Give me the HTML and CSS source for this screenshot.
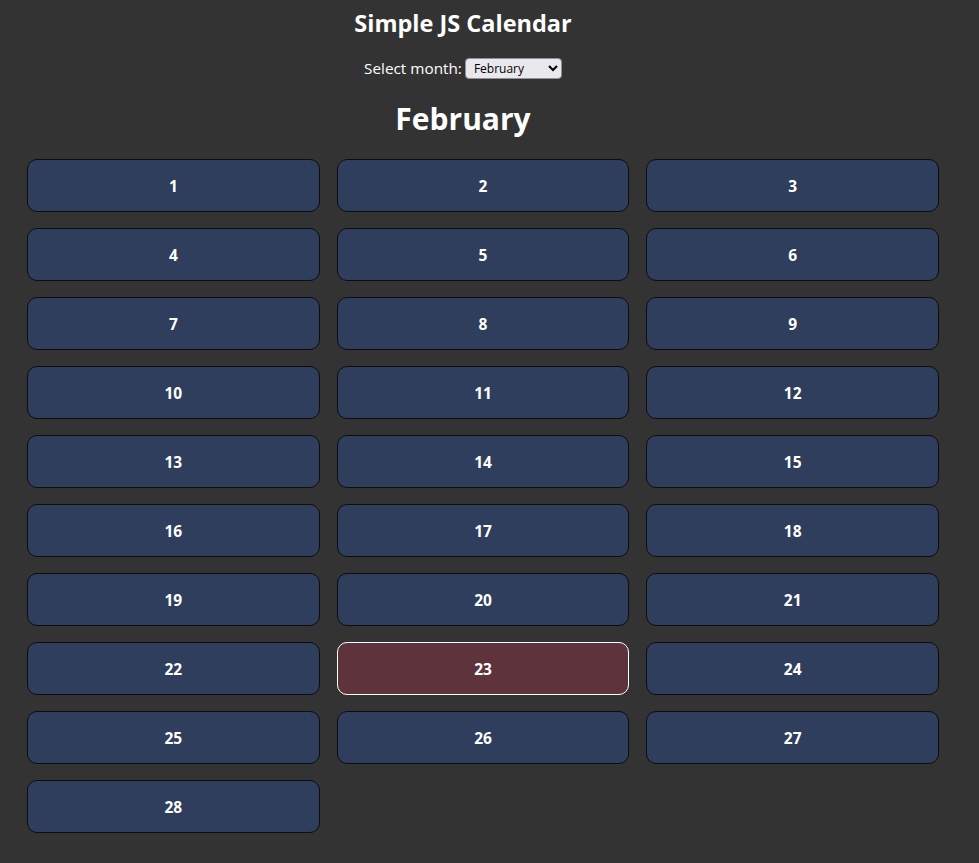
FILE: index.html
```html
<!DOCTYPE html>
<html>
<head>
<meta charset="utf-8">
<link rel="stylesheet" href="styles.css">
</head>
<body>
<header class="top">
  <h1 class="title">Simple JS Calendar</h1>
  <div class="picker">
    <label for="month">Select month:</label>
    <select id="month" class="month-select">
      <option>January</option>
      <option selected>February</option>
      <option>March</option>
    </select>
  </div>
  <h2 class="month-name">February</h2>
</header>
<main class="grid">
  <div class="day">1</div><div class="day">2</div><div class="day">3</div>
  <div class="day">4</div><div class="day">5</div><div class="day">6</div>
  <div class="day">7</div><div class="day">8</div><div class="day">9</div>
  <div class="day">10</div><div class="day">11</div><div class="day">12</div>
  <div class="day">13</div><div class="day">14</div><div class="day">15</div>
  <div class="day">16</div><div class="day">17</div><div class="day">18</div>
  <div class="day">19</div><div class="day">20</div><div class="day">21</div>
  <div class="day">22</div><div class="day today">23</div><div class="day">24</div>
  <div class="day">25</div><div class="day">26</div><div class="day">27</div>
  <div class="day">28</div>
</main>
</body>
</html>
```
FILE: styles.css
```css
html, body {
  margin: 0;
  padding: 0;
  background: #333333;
  color: #ffffff;
  font-family: "Open Sans", "DejaVu Sans", sans-serif;
}
.top {
  width: 926px;
  text-align: center;
  padding-top: 8px;
}
.title {
  margin: 0;
  font-size: 23.5px;
  line-height: 30px;
  font-weight: 700;
}
.picker {
  margin-top: 19px;
  font-size: 15.3px;
  line-height: 22px;
  display: flex;
  justify-content: center;
  align-items: center;
  gap: 3px;
}
.month-select {
  font-family: "Open Sans", "DejaVu Sans", sans-serif;
  font-size: 12px;
  width: 97px;
  height: 21px;
  background: #e9e9ed;
  color: #000;
  border: 1px solid #8f8f9d;
  border-radius: 4px;
  padding: 0 4px;
}
.month-name {
  margin: 20px 0 0;
  font-size: 30px;
  line-height: 40px;
  font-weight: 700;
}
.grid {
  margin: 20px 0 0 27px;
  width: 912px;
  display: grid;
  grid-template-columns: repeat(3, 1fr);
  column-gap: 17px;
  row-gap: 16px;
  padding-bottom: 30px;
}
.day {
  height: 51px;
  background: #2e3e5c;
  border: 1px solid #0d0d0d;
  border-radius: 10px;
  display: flex;
  align-items: center;
  justify-content: center;
  font-weight: 700;
  font-size: 15.5px;
}
.day.today {
  background: #5e333b;
  border-color: #ffffff;
}
```
